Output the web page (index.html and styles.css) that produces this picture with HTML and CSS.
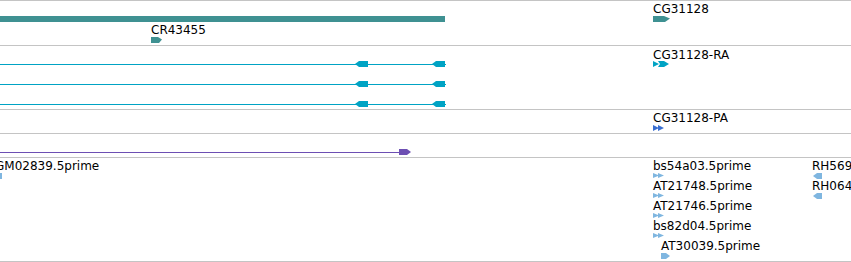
FILE: index.html
```html
<!DOCTYPE html>
<html>
<head>
<meta charset="utf-8">
<link rel="stylesheet" href="styles.css">
</head>
<body>
<div class="view">
  <div class="track t-genes">
    <div class="bar teal" style="left:0;top:15px;width:445px"></div>
    <div class="label" style="left:151px;top:22px">CR43455</div>
    <svg class="glyph" style="left:151px;top:36px" width="11" height="6" viewBox="0 0 11 6"><polygon points="0,0 7,0 11,2.5 8,6 0,6" fill="#3f9192"/></svg>
    <div class="label" style="left:653px;top:1px">CG31128</div>
    <svg class="glyph" style="left:653px;top:15px" width="17" height="6" viewBox="0 0 17 6"><polygon points="0,0 11,0 17,2.5 12,6 0,6" fill="#3f9192"/></svg>
  </div>

  <div class="track t-transcripts">
    <div class="line cyan" style="left:0;top:18px;width:446px"></div>
    <div class="line cyan" style="left:0;top:38px;width:446px"></div>
    <div class="line cyan" style="left:0;top:58px;width:446px"></div>
    <svg class="glyph" style="left:355px;top:15px" width="13" height="6" viewBox="0 0 13 6"><polygon points="0,3 4,0 13,0 13,6 4,6" fill="#00a3c4"/></svg>
    <svg class="glyph" style="left:432px;top:15px" width="13" height="6" viewBox="0 0 13 6"><polygon points="0,3 4,0 13,0 13,6 4,6" fill="#00a3c4"/></svg>
    <svg class="glyph" style="left:355px;top:35px" width="13" height="6" viewBox="0 0 13 6"><polygon points="0,3 4,0 13,0 13,6 4,6" fill="#00a3c4"/></svg>
    <svg class="glyph" style="left:432px;top:35px" width="13" height="6" viewBox="0 0 13 6"><polygon points="0,3 4,0 13,0 13,6 4,6" fill="#00a3c4"/></svg>
    <svg class="glyph" style="left:355px;top:55px" width="13" height="6" viewBox="0 0 13 6"><polygon points="0,3 4,0 13,0 13,6 4,6" fill="#00a3c4"/></svg>
    <svg class="glyph" style="left:432px;top:55px" width="13" height="6" viewBox="0 0 13 6"><polygon points="0,3 4,0 13,0 13,6 4,6" fill="#00a3c4"/></svg>
    <div class="label" style="left:653px;top:2px">CG31128-RA</div>
    <svg class="glyph" style="left:653px;top:15px" width="16" height="6" viewBox="0 0 16 6"><polygon points="0,0 6,3 0,6" fill="#00a3c4"/><polygon points="5,0 11,0 16,3 11,6 5,6 7,3" fill="#00a3c4"/></svg>
  </div>

  <div class="track t-cds">
    <div class="label" style="left:653px;top:1px">CG31128-PA</div>
    <svg class="glyph" style="left:653px;top:15px" width="11" height="6" viewBox="0 0 11 6"><polygon points="0,0 6,3 0,6" fill="#3a6fd0"/><polygon points="5,0 11,3 5,6" fill="#3a6fd0"/></svg>
  </div>

  <div class="track t-other">
    <div class="line purple" style="left:0;top:18px;width:400px"></div>
    <svg class="glyph" style="left:399px;top:15px" width="12" height="6" viewBox="0 0 12 6"><polygon points="0,0 8,0 12,3 8,6 0,6" fill="#6d4fb3"/></svg>
  </div>

  <div class="track t-ests">
    <div class="label" style="left:-5px;top:1px">GM02839.5prime</div>
    <svg class="glyph" style="left:-8px;top:15px" width="10" height="6" viewBox="0 0 10 6"><polygon points="0,0 10,0 10,6 0,6" fill="#7fb6e0"/></svg>

    <div class="label" style="left:653px;top:1px">bs54a03.5prime</div>
    <svg class="glyph" style="left:653px;top:15px" width="11" height="5" viewBox="0 0 11 5"><polygon points="0,0 5,2 5,0 11,2.5 5,5 5,3 0,5" fill="#7fb6e0"/></svg>
    <div class="label" style="left:653px;top:21px">AT21748.5prime</div>
    <svg class="glyph" style="left:653px;top:35px" width="11" height="5" viewBox="0 0 11 5"><polygon points="0,0 5,2 5,0 11,2.5 5,5 5,3 0,5" fill="#7fb6e0"/></svg>
    <div class="label" style="left:653px;top:41px">AT21746.5prime</div>
    <svg class="glyph" style="left:653px;top:55px" width="11" height="5" viewBox="0 0 11 5"><polygon points="0,0 5,2 5,0 11,2.5 5,5 5,3 0,5" fill="#7fb6e0"/></svg>
    <div class="label" style="left:653px;top:61px">bs82d04.5prime</div>
    <svg class="glyph" style="left:653px;top:75px" width="11" height="5" viewBox="0 0 11 5"><polygon points="0,0 5,2 5,0 11,2.5 5,5 5,3 0,5" fill="#7fb6e0"/></svg>
    <div class="label" style="left:661px;top:81px">AT30039.5prime</div>
    <svg class="glyph" style="left:661px;top:95px" width="9" height="6" viewBox="0 0 9 6"><polygon points="0,0 5,0 9,3 5,6 0,6" fill="#7fb6e0"/></svg>

    <div class="label" style="left:812px;top:1px">RH56902.5prime</div>
    <svg class="glyph" style="left:813px;top:15px" width="9" height="6" viewBox="0 0 9 6"><polygon points="0,3 4,0 9,0 9,6 4,6" fill="#7fb6e0"/></svg>
    <div class="label" style="left:812px;top:21px">RH06431.5prime</div>
    <svg class="glyph" style="left:813px;top:35px" width="9" height="6" viewBox="0 0 9 6"><polygon points="0,3 4,0 9,0 9,6 4,6" fill="#7fb6e0"/></svg>
  </div>
</div>
</body>
</html>
```

FILE: styles.css
```css
html, body {
  margin: 0;
  padding: 0;
  background: #ffffff;
}

.view {
  width: 851px;
  display: flex;
  flex-direction: column;
  font-family: "DejaVu Sans", "Liberation Sans", sans-serif;
  font-size: 12px;
  color: #000;
}

.track {
  position: relative;
  overflow: hidden;
  border-top: 1px solid #c4c4c4;
}

.t-genes { height: 44px; }
.t-transcripts { height: 63px; }
.t-cds { height: 23px; }
.t-other { height: 23px; }
.t-ests {
  height: 103px;
  border-bottom: 1px solid #c4c4c4;
}

.label {
  position: absolute;
  line-height: 14px;
  white-space: nowrap;
}

.glyph {
  position: absolute;
  display: block;
}

.bar {
  position: absolute;
  height: 6px;
}

.line {
  position: absolute;
  height: 1px;
}

.teal { background: #3f9192; }
.cyan { background: #00a3c4; }
.purple { background: #6d4fb3; }
```
